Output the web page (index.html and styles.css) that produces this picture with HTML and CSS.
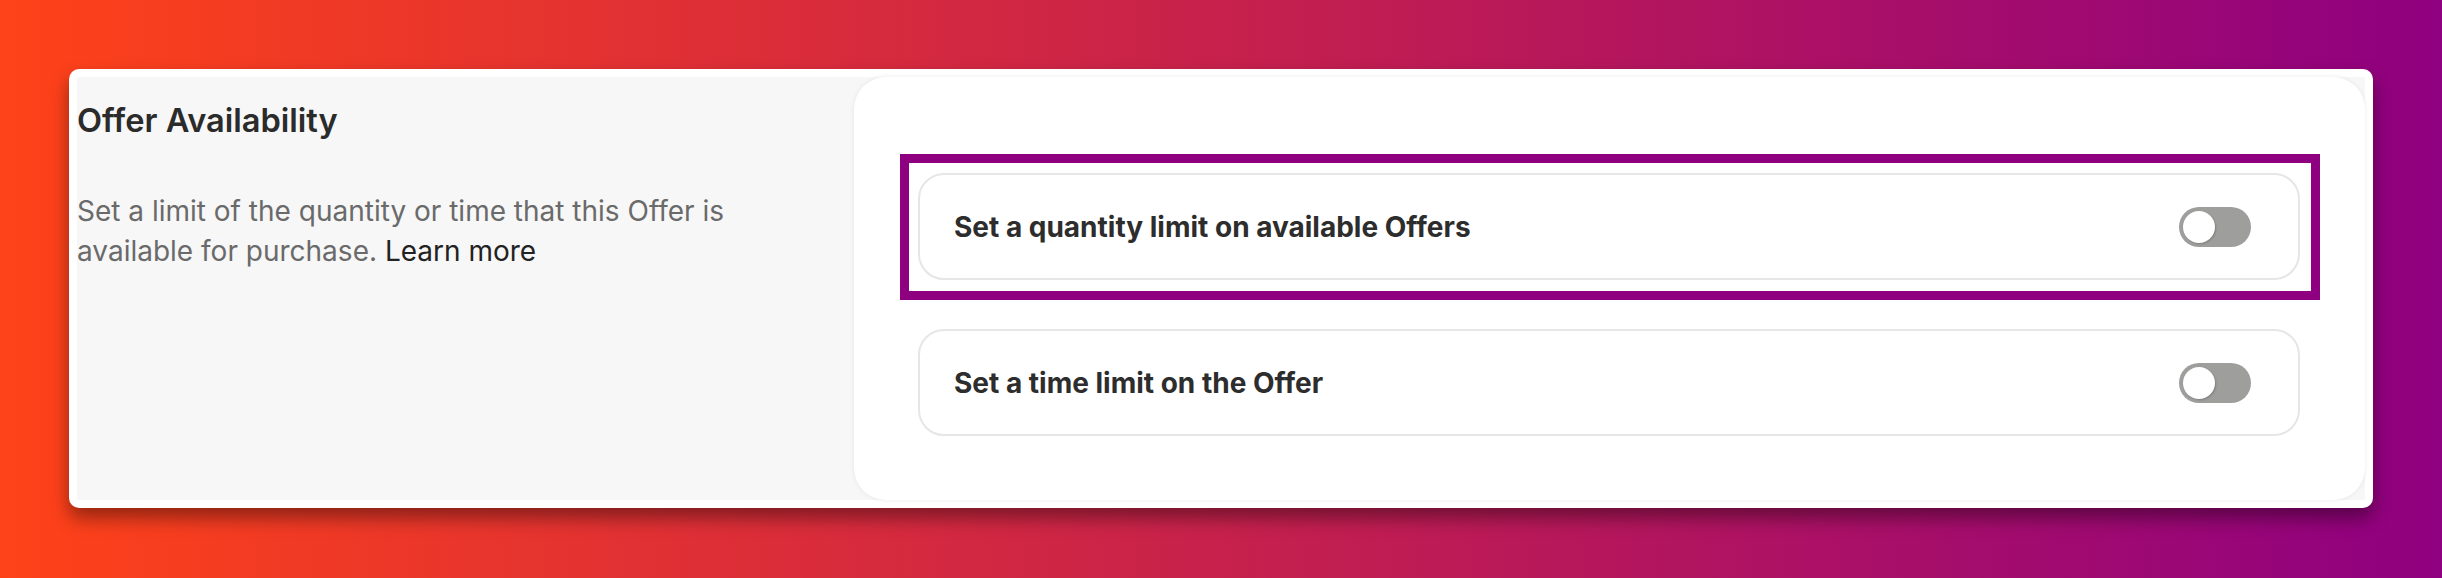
FILE: index.html
```html
<!doctype html>
<html>
  <head>
    <meta charset="utf-8">
    <title>Offer Availability</title>
    <meta name="viewport" content="width=device-width, initial-scale=1">
    <link rel="stylesheet" href="styles.css">
  </head>
  <body>
    <main>
      <section class="card">
        <div class="card-inner">

          <div class="intro">
            <h2>Offer Availability</h2>
            <p>Set a limit of the quantity or time that this Offer is available for purchase. <a href="#">Learn more</a></p>
          </div>

          <div class="options">
            <label class="option highlighted">
              <span>Set a quantity limit on available Offers</span>
              <span class="toggle"><span class="knob"></span></span>
            </label>
            <label class="option">
              <span>Set a time limit on the Offer</span>
              <span class="toggle"><span class="knob"></span></span>
            </label>
          </div>

        </div>
      </section>
    </main>
  </body>
</html>
```

FILE: styles.css
```css
body {
  padding: 0;
  margin: 0;
  font-family: Inter, "Noto Sans", sans-serif;
  background: linear-gradient(90deg, #fe4218, #8f0080);
  min-height: 578px;
}
main {
  box-sizing: border-box;
  padding: 69px;
}
.card {
  background-color: #fff;
  border-radius: 10px;
  padding: 8px;
  box-shadow: 0 10px 18px rgba(0, 0, 0, 0.4);
}
.card-inner {
  display: grid;
  grid-template-columns: 777px 1fr;
  background-color: #f7f7f7;
}
.intro {
  padding: 23px 40px 0 0;
}
.intro h2 {
  margin: 0;
  font-size: 32.6px;
  line-height: 40px;
  font-weight: 600;
  color: #2b2b2b;
}
.intro p {
  margin: 51px 0 0 0;
  font-size: 28px;
  line-height: 40px;
  color: #6a6a6a;
}
.intro a {
  color: #222;
  text-decoration: none;
}
.options {
  display: flex;
  flex-direction: column;
  gap: 49px;
  background-color: #fff;
  border-radius: 32px;
  padding: 96px 65px 64px 64px;
  box-shadow: 0 0 5px rgba(0, 0, 0, 0.08);
}
.option {
  display: flex;
  align-items: center;
  justify-content: space-between;
  border: 2px solid #e6e6e6;
  border-radius: 26px;
  padding: 31.5px 47px 31.5px 34px;
  font-size: 28px;
  line-height: 40px;
  font-weight: 700;
  color: #2d2d2d;
}
/* square annotation frame drawn over the first option */
.highlighted {
  position: relative;
}
.highlighted::after {
  content: "";
  position: absolute;
  top: -21px;
  left: -20px;
  right: -22px;
  bottom: -22px;
  border: 9px solid #8e0080;
  pointer-events: none;
}
.toggle {
  display: flex;
  align-items: center;
  box-sizing: border-box;
  width: 72px;
  height: 40px;
  padding: 4px;
  border-radius: 20px;
  background-color: #9e9e9c;
}
.knob {
  width: 32px;
  height: 32px;
  border-radius: 50%;
  background-color: #fff;
  box-shadow: 1px 1px 2px rgba(0, 0, 0, 0.2);
}
```
